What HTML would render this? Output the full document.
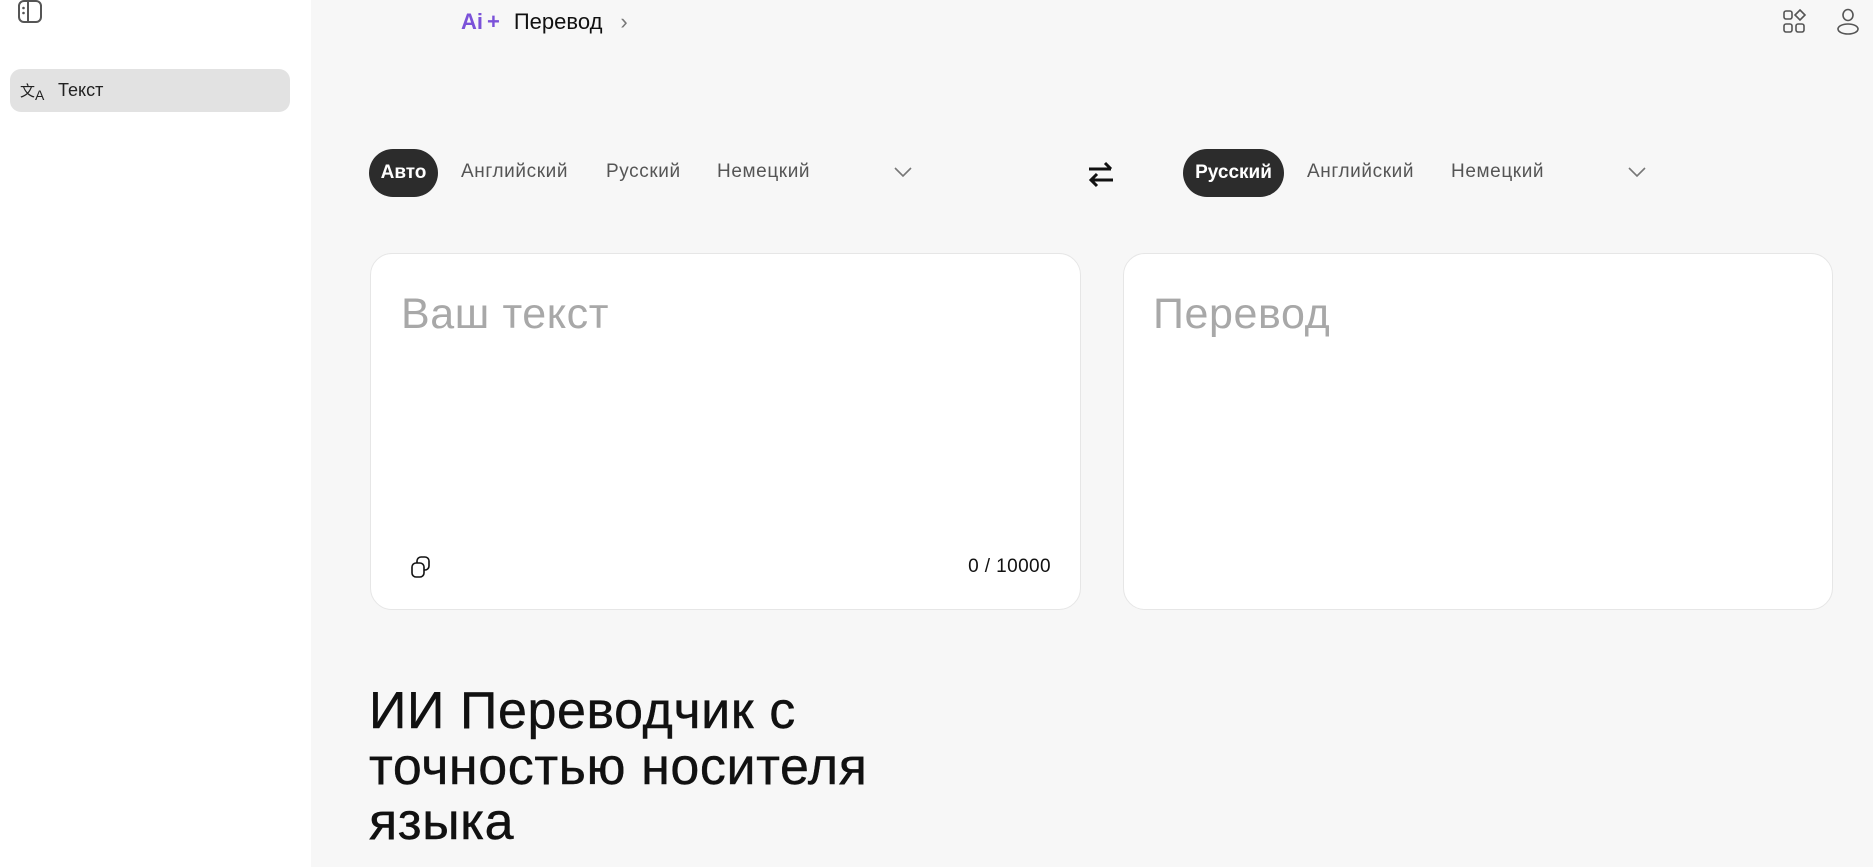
<!DOCTYPE html>
<html><head><meta charset="utf-8"><style>
*{margin:0;padding:0;box-sizing:border-box}
body{width:1873px;height:867px;overflow:hidden;background:#f7f7f7;font-family:"Liberation Sans",sans-serif;position:relative}
.side{position:absolute;left:0;top:0;width:311px;height:867px;background:#fff}
.item{position:absolute;left:10px;top:69px;width:280px;height:43px;background:#e2e2e2;border-radius:11px}
.abs{position:absolute}
.lang{position:absolute;top:161px;font-size:19px;color:#555;line-height:22px;letter-spacing:0.6px}
.pill{position:absolute;top:149px;height:48px;background:#2c2c2c;color:#fff;border-radius:24px;font-size:19px;font-weight:bold;line-height:48px;text-align:center}
.card{position:absolute;top:253px;height:357px;background:#fff;border:1px solid #e6e6e6;border-radius:22px}
.ph{position:absolute;top:290px;font-size:43px;color:#a8a8a8;letter-spacing:0.6px}
h1{position:absolute;left:369px;top:684px;font-size:52px;font-weight:normal;line-height:55.5px;color:#111;letter-spacing:0.6px;-webkit-text-stroke:0.4px #111}
</style></head><body>
<div class="side">
<svg class="abs" style="left:17px;top:0" width="26" height="24" viewBox="0 0 26 24"><rect x="2" y="1" width="22" height="21" rx="5" fill="none" stroke="#555" stroke-width="2"/><line x1="11" y1="1" x2="11" y2="22" stroke="#555" stroke-width="2"/><circle cx="6.5" cy="8" r="1.3" fill="#555"/><circle cx="6.5" cy="13" r="1.3" fill="#555"/></svg>
<div class="item"></div>
<div class="abs" style="left:20px;top:80px;font-size:15px;color:#222">文<sub style="font-size:14px">A</sub></div>
<div class="abs" style="left:58px;top:80px;font-size:18px;color:#222">Текст</div>
</div>
<div class="abs" style="left:461px;top:9px;font-size:22px;color:#111"><span style="color:#7b52d9;font-weight:bold">Ai</span><span style="color:#7b52d9;font-weight:bold;margin-left:4px">+</span><span style="margin-left:14px">Перевод</span><span style="color:#777;margin-left:18px">›</span></div>
<svg class="abs" style="left:1782px;top:9px" width="26" height="26" viewBox="0 0 26 26" fill="none" stroke="#555" stroke-width="1.6"><rect x="2" y="2" width="8" height="8" rx="2"/><path d="M18 1l5 5-5 5-5-5z"/><rect x="2" y="15" width="8" height="8" rx="2"/><rect x="14" y="15" width="8" height="8" rx="2"/></svg>
<svg class="abs" style="left:1836px;top:8px" width="24" height="28" viewBox="0 0 24 28" fill="none" stroke="#555" stroke-width="1.6"><ellipse cx="12" cy="7" rx="5" ry="5.5"/><ellipse cx="12" cy="21" rx="10" ry="5"/></svg>

<div class="pill" style="left:369px;width:69px">Авто</div>
<div class="lang" style="left:461px">Английский</div>
<div class="lang" style="left:606px">Русский</div>
<div class="lang" style="left:717px">Немецкий</div>
<svg class="abs" style="left:893px;top:165px" width="20" height="14"><path d="M2 3l8 8 8-8" fill="none" stroke="#777" stroke-width="1.6"/></svg>
<svg class="abs" style="left:1086px;top:160px" width="30" height="28" viewBox="0 0 30 28"><path d="M3 9h22M19 3l6 6" fill="none" stroke="#111" stroke-width="3"/><path d="M27 20H5M11 14l-6 6 6 6" fill="none" stroke="#111" stroke-width="3"/></svg>
<div class="pill" style="left:1183px;width:101px">Русский</div>
<div class="lang" style="left:1307px">Английский</div>
<div class="lang" style="left:1451px">Немецкий</div>
<svg class="abs" style="left:1627px;top:165px" width="20" height="14"><path d="M2 3l8 8 8-8" fill="none" stroke="#777" stroke-width="1.6"/></svg>

<div class="card" style="left:370px;width:711px"></div>
<div class="card" style="left:1123px;width:710px"></div>
<div class="ph" style="left:401px">Ваш текст</div>
<div class="ph" style="left:1153px">Перевод</div>
<svg class="abs" style="left:409px;top:555px" width="24" height="24" viewBox="0 0 24 24" fill="none" stroke="#111" stroke-width="1.6"><rect x="8" y="2" width="12" height="13" rx="4"/><rect x="3" y="8" width="12" height="14" rx="4" fill="#fff"/></svg>
<div class="abs" style="left:946px;top:556px;width:105px;text-align:right;font-size:19px;color:#111;letter-spacing:0.4px">0 / 10000</div>
<h1>ИИ Переводчик с<br>точностью носителя<br>языка</h1>
</body></html>
